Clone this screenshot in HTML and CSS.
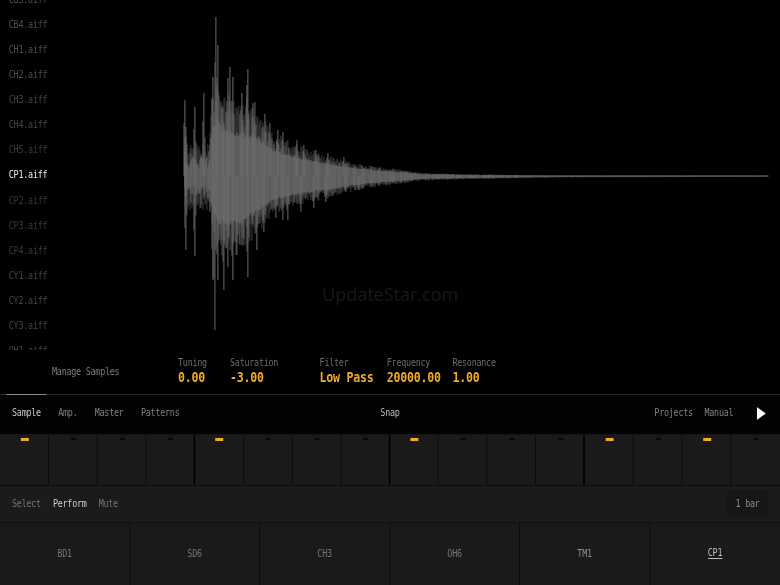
FILE: index.html
```html
<!DOCTYPE html>
<html lang="en">
<head>
<meta charset="utf-8">
<title>Sampler</title>
<link rel="stylesheet" href="styles.css">
</head>
<body>
<div class="app">
  <section class="top">
    <aside class="side">
      <ul class="files">
        <li class="f1">CB3.aiff</li>
        <li class="f1">CB4.aiff</li>
        <li class="f1">CH1.aiff</li>
        <li class="f1">CH2.aiff</li>
        <li class="f2">CH3.aiff</li>
        <li class="f2">CH4.aiff</li>
        <li class="f3">CH5.aiff</li>
        <li class="cur">CP1.aiff</li>
        <li class="f3">CP2.aiff</li>
        <li class="f3">CP3.aiff</li>
        <li class="f3">CP4.aiff</li>
        <li class="f2">CY1.aiff</li>
        <li class="f2">CY2.aiff</li>
        <li class="f2">CY3.aiff</li>
        <li class="f2">OH1.aiff</li>
      </ul>
      <div class="manage">Manage Samples</div>
    </aside>
    <div class="main">
      <svg id="wave" class="wave" viewBox="178 0 602 350" preserveAspectRatio="none" aria-hidden="true">
        <path id="w-dark" class="w-dark" d=""></path>
        <path id="w-mid" class="w-mid" d=""></path>
        <path id="w-light" class="w-light" d=""></path>
      </svg>
      <div class="params">
        <div class="param"><span class="p-label">Tuning</span><span class="p-val">0.00</span></div>
        <div class="param"><span class="p-label">Saturation</span><span class="p-val">-3.00</span></div>
        <div class="param"><span class="p-label">Filter</span><span class="p-val">Low Pass</span></div>
        <div class="param"><span class="p-label">Frequency</span><span class="p-val">20000.00</span></div>
        <div class="param"><span class="p-label">Resonance</span><span class="p-val">1.00</span></div>
      </div>
    </div>
  </section>

  <nav class="tabs">
    <div class="tab-left">
      <span class="tab active">Sample</span>
      <span class="tab">Amp.</span>
      <span class="tab">Master</span>
      <span class="tab">Patterns</span>
    </div>
    <span class="snap">Snap</span>
    <div class="tab-right">
      <span class="tab">Projects</span>
      <span class="tab">Manual</span>
      <svg class="play" viewBox="0 0 9 13" preserveAspectRatio="none" aria-hidden="true"><path d="M0 0L9 6.5L0 13Z"></path></svg>
    </div>
  </nav>

  <div class="steps">
    <div class="step on"><i></i></div><div class="step"><i></i></div><div class="step"><i></i></div><div class="step end"><i></i></div>
    <div class="step on"><i></i></div><div class="step"><i></i></div><div class="step"><i></i></div><div class="step end"><i></i></div>
    <div class="step on"><i></i></div><div class="step"><i></i></div><div class="step"><i></i></div><div class="step end"><i></i></div>
    <div class="step on"><i></i></div><div class="step"><i></i></div><div class="step on"><i></i></div><div class="step"><i></i></div>
  </div>

  <div class="bar">
    <span class="mode">Select</span>
    <span class="mode cur-mode">Perform</span>
    <span class="mode">Mute</span>
    <span class="len">1 bar</span>
  </div>

  <div class="pads">
    <div class="pad">BD1</div>
    <div class="pad">SD6</div>
    <div class="pad">CH3</div>
    <div class="pad">OH6</div>
    <div class="pad tm">TM1</div>
    <div class="pad sel"><span>CP1</span></div>
  </div>
</div>
<div class="mark">UpdateStar.com</div>
<script src="waveform.js"></script>
</body>
</html>
```
FILE: styles.css
```css
* { box-sizing: border-box; }
html, body { margin: 0; padding: 0; width: 780px; height: 585px; overflow: hidden; background: #000; }
body { position: relative; }

/* The whole UI is drawn in a horizontally condensed coordinate space (1 real px = 1.25 units). */
.app {
  width: 975px;
  height: 585px;
  transform: scaleX(.8);
  transform-origin: 0 0;
  display: flex;
  flex-direction: column;
  font-family: "DejaVu Sans Mono", "Liberation Mono", monospace;
  font-size: 10.5px;
  letter-spacing: -.3px;
  line-height: 12px;
  color: #888;
}

.top { height: 394px; display: flex; flex: none; }
.side { width: 222.5px; flex: none; display: flex; flex-direction: column; }
.files {
  list-style: none;
  margin: 0;
  padding: 0 0 0 11px;
  height: 350px;
  overflow: hidden;
  flex: none;
}
.files li { height: 25.07px; line-height: 25.07px; position: relative; top: -13px; }
.f1 { color: #4e4e4e; }
.f2 { color: #444; }
.f3 { color: #3a3a3a; }
.cur { color: #eee; }
.manage { padding: 15px 0 0 65px; color: #7c7c7c; }

.main { flex: 1; display: flex; flex-direction: column; }
.wave { display: block; width: 752.5px; height: 350px; flex: none; filter: blur(.3px); }
.w-dark, .w-mid, .w-light { fill: none; stroke-width: 1; }
.w-dark { stroke: #3c3c3c; }
.w-mid { stroke: #5a5a5a; }
.w-light { stroke: #6c6c6c; }

.params { display: grid; grid-template-columns: 65px 112px 84px 82px auto; padding-top: 6px; }
.param { display: flex; flex-direction: column; }
.p-label { color: #6c6c6c; height: 14px; }
.p-val { color: #eeab26; font-size: 14.5px; letter-spacing: -.3px; font-weight: 700; line-height: 15px; white-space: nowrap; }

.tabs {
  height: 40px;
  flex: none;
  border-top: 1px solid #262626;
  display: grid;
  grid-template-columns: 1fr auto 1fr;
  align-items: center;
  padding-bottom: 5px;
  background: #030303;
}
.tab-left { display: flex; gap: 21.6px; padding-left: 15px; }
.tab-right { display: flex; gap: 14.5px; justify-content: flex-end; align-items: center; padding-right: 17.5px; }
.tab { color: #808080; position: relative; }
.tab.active { color: #c8c8c8; }
.tab.active::before {
  content: "";
  position: absolute;
  left: -7.5px;
  right: -6.5px;
  top: -12px;
  height: 1px;
  background: #8a8a8a;
}
.snap { color: #bbb; }
.play { width: 11.25px; height: 13px; fill: #fff; margin-left: 15px; position: relative; top: 1px; }

.steps {
  height: 52px;
  flex: none;
  display: grid;
  grid-template-columns: repeat(16, 1fr);
  background: #1a1a1a;
  border-top: 1px solid #141414;
  border-bottom: 1px solid #0b0b0b;
}
.step { border-right: 1px solid #0a0a0a; display: flex; justify-content: center; padding: 3px 0 0 1.5px; }
.step.end { border-right: 2px solid #000; }
.step:last-child { border-right: 0; }
.step i { display: block; width: 6px; height: 2px; background: #060606; }
.step.on i { width: 10px; height: 3px; background: #eeab26; }

.bar {
  height: 37px;
  flex: none;
  background: #1b1b1b;
  border-bottom: 1px solid #101010;
  display: flex;
  align-items: center;
  gap: 15px;
  padding: 0 15px 2px;
}
.mode { color: #747474; }
.cur-mode { color: #cfcfcf; }
.len {
  margin-left: auto;
  width: 51px;
  height: 27px;
  line-height: 27px;
  text-align: center;
  background: #161616;
  color: #8c8c8c;
}

.pads { flex: 1; display: grid; grid-template-columns: repeat(6, 1fr); background: #1a1a1a; }
.pad {
  display: flex;
  align-items: center;
  justify-content: center;
  color: #747474;
  border-right: 1px solid #0c0c0c;
  padding-bottom: 2px;
}
.pad:last-child { border-right: 0; }
.tm { color: #8c8c8c; }
.sel { color: #bcbcbc; }
.sel span { border-bottom: 1px solid #bcbcbc; line-height: 11px; }

.mark {
  position: absolute;
  left: 322px;
  top: 283px;
  font-family: "Open Sans", "Noto Sans", sans-serif;
  font-size: 18px;
  line-height: 22px;
  color: #181818;
  white-space: nowrap;
}
```
FILE: waveform.js
```js
(function () {
  var C = 176;
  var topEnv = [[184,152],[187,156],[208,156],[211,128],[216,116],[222,128],[255,135],[275,150],[298,157],[325,163],[348,167],[375,170],[400,172],[420,174],[470,175],[560,175.5],[768,175.5]];
  var botEnv = [[184,202],[187,198],[208,198],[211,208],[218,226],[240,226],[262,208],[275,200],[300,194],[330,190],[350,186],[375,183],[400,181],[420,179],[470,178],[560,177],[768,176.6]];
  var topSpikes = [[184,100],[185,127],[194,107],[203,93],[212,77],[215,17],[217,45],[222,107],[227,78],[229,67],[232,77],[241,93],[246,85],[247,69],[252,103],[254,102],[264,114],[269,123],[277,130],[282,132],[296,140],[303,145],[315,150],[327,153],[343,157],[346,163]];
  var botSpikes = [[185,250],[194,256],[212,280],[214,330],[217,280],[223,290],[227,267],[232,280],[236,255],[247,277],[256,250],[263,232],[275,218],[282,220],[287,220],[300,212],[313,208],[325,202],[345,192],[358,190]];

  function lerp(t, x) {
    for (var i = 1; i < t.length; i++) {
      if (x <= t[i][0]) {
        var a = t[i - 1], b = t[i];
        return a[1] + (b[1] - a[1]) * (x - a[0]) / (b[0] - a[0]);
      }
    }
    return t[t.length - 1][1];
  }
  var s = 7;
  function rnd() { s = (s * 16807) % 2147483647; return s / 2147483647; }
  function seg(x, a, b) { return "M" + (x + 0.5) + " " + a.toFixed(1) + "V" + b.toFixed(1); }

  var dark = "", mid = "", light = "";
  for (var x = 184; x < 768; x++) {
    var t = lerp(topEnv, x), b = lerp(botEnv, x);
    var ut = C - t, ub = b - C;
    var teeth = x < 210 ? 0.6 : 0.12;
    var lt = C - ut * (1 - rnd() * teeth);
    var lb = C + ub * (1 - rnd() * teeth);
    light += seg(x, lt, Math.max(lb, lt + 1));
    dark += seg(x, C - ut * (1.05 + rnd() * 0.6), C + ub * (1.05 + rnd() * 0.55));
    if (x < 520 && rnd() < 0.3) {
      mid += seg(x, C - ut * (1 + rnd() * 0.45), C + ub * (1 + rnd() * 0.45));
    }
  }
  function spike(list, side) {
    list.forEach(function (p) {
      var base = side < 0 ? lerp(topEnv, p[0]) : lerp(botEnv, p[0]);
      light += seg(p[0], p[1], C);
      var half = base + (p[1] - base) * 0.55;
      mid += seg(p[0] - 1, half, C) + seg(p[0] + 1, base + (p[1] - base) * 0.3, C);
    });
  }
  spike(topSpikes, -1);
  spike(botSpikes, 1);
  document.getElementById("w-dark").setAttribute("d", dark);
  document.getElementById("w-mid").setAttribute("d", mid);
  document.getElementById("w-light").setAttribute("d", light);
})();
```
